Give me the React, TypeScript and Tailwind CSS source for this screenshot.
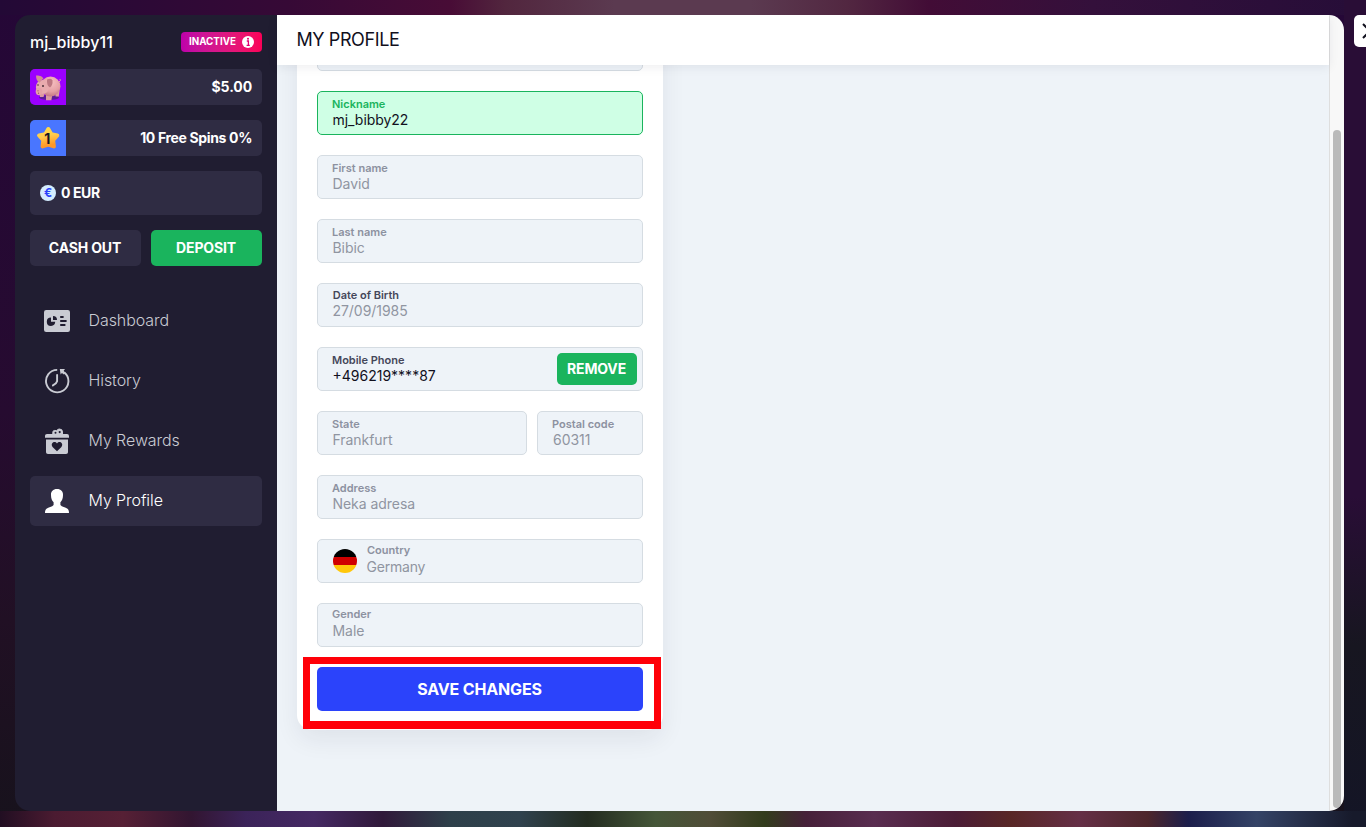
import React from "react";

type FieldProps = {
  label: string;
  value: string;
  className?: string;
  labelClass?: string;
  valueClass?: string;
};

function Field({
  label,
  value,
  className = "w-full border-[#d5dce2] bg-[#eef3f8] pt-[4px]",
  labelClass = "text-[#8c91a0]",
  valueClass = "text-[#9095a1]",
}: FieldProps) {
  return (
    <div className={`flex h-11 flex-col rounded-[5px] border pl-[14px] ${className}`}>
      <span className={`text-[11px] font-semibold leading-4 ${labelClass}`}>{label}</span>
      <span className={`pl-[0.5px] text-[14px] font-normal leading-4 tracking-[-0.05px] ${valueClass}`}>{value}</span>
    </div>
  );
}

function PigIcon() {
  return (
    <svg viewBox="0 0 36 36" className="h-9 w-9">
      <defs>
        <radialGradient id="pig" cx="0.55" cy="0.3" r="0.75">
          <stop offset="0" stopColor="#f7c0c2" />
          <stop offset="0.6" stopColor="#e5a0a5" />
          <stop offset="1" stopColor="#bd6f7e" />
        </radialGradient>
      </defs>
      <ellipse cx="19" cy="28.5" rx="10" ry="2.5" fill="#5b1c9a" />
      <path d="M29 13q2-1 1-3" stroke="#e3a3a7" fill="none" />
      <path d="M9.5 24l.6 4h3.4l1-3M25 22l.6 5.5h3.2l.8-6M16 26v5.3h5.4l.8-5" fill="#dc9aa0" />
      <ellipse cx="20.5" cy="17.5" rx="10" ry="10" fill="url(#pig)" />
      <ellipse cx="12.5" cy="18" rx="6.6" ry="7" fill="#e9abae" />
      <path d="M6 6.6q5-1 7.5 2.6l-4 4.6q-3.5-2-3.5-7.2z" fill="#d28e95" />
      <path d="M17 10.5q4.5-2 5.5 1 .5 4.5-2.5 7-3.5-2-3-8z" fill="#bd7882" />
      <ellipse cx="9" cy="22.5" rx="3.3" ry="3.7" fill="#e5a2a7" />
      <circle cx="8" cy="21.8" r=".6" fill="#8e4b58" />
      <circle cx="8.5" cy="24.2" r=".6" fill="#8e4b58" />
      <circle cx="8" cy="16" r=".8" fill="#493039" />
      <circle cx="13" cy="17" r="1" fill="#493039" />
    </svg>
  );
}

function StarIcon() {
  return (
    <svg viewBox="0 0 36 36" className="h-9 w-9">
      <defs>
        <linearGradient id="star" x1="0" y1="0" x2="0.2" y2="1">
          <stop offset="0" stopColor="#ffdc49" />
          <stop offset="0.45" stopColor="#ffcc4c" />
          <stop offset="1" stopColor="#ff9828" />
        </linearGradient>
      </defs>
      <path
        d="M18.3 9l3 5.3 6 1.2-4.2 4.7.8 6.2-5.6-1.7-5.7 1.7.7-6.2-4.2-4.700 6.200-1.200z"
        fill="url(#star)"
        stroke="url(#star)"
        strokeWidth="4"
        strokeLinejoin="round"
      />
      <text x="17.3" y="23.5" textAnchor="middle" fontFamily="Inter" fontSize="14" fontWeight="700" fill="#171525">1</text>
    </svg>
  );
}

function DashboardIcon() {
  return (
    <svg viewBox="0 0 26 22" className="h-[22px] w-[26px]">
      <rect width="26" height="22" rx="2.2" fill="#c9cbd3" />
      <path d="M7 7.5v4.3h4.2A4.2 4.2 0 1 1 7 7.5z" fill="#201d31" />
      <path d="M9 6a4 4 0 0 1 4 4H9z" fill="#201d31" />
      <path d="M16.2 7h3.4M16.2 11h6.4M16.2 15h5.2" stroke="#201d31" strokeWidth="1.8" />
    </svg>
  );
}

function HistoryIcon() {
  return (
    <svg viewBox="0 0 26 26" className="h-[26px] w-[26px]" fill="none" stroke="#c9cbd3">
      <path d="M13.2 1.9A11.2 11.2 0 1 0 20.4 4.5" strokeWidth="1.9" />
      <path d="M15.8 1h5.2l-1.300 1.800 1.800 2.200-1.600 1.400-2-1.400-1.300 1.500z" fill="#c9cbd3" stroke="none" />
      <path d="M13.1 7v6.2q-.4 2-4.2 4.2" strokeWidth="1.9" strokeLinecap="round" />
    </svg>
  );
}

function RewardsIcon() {
  return (
    <svg viewBox="0 0 24 27" className="h-[27px] w-6">
      <path d="M7.8 6.6V4.2Q7.8 2.4 9.8 2.4l1.8.4Q12.4 1 14.5 1q3 0 3 3v2.6" fill="#c9cbd3" stroke="#c9cbd3" />
      <circle cx="10.5" cy="4.8" r="1" fill="#201d31" />
      <circle cx="14.7" cy="4.1" r="1.1" fill="#201d31" />
      <path d="M0 9V7.8Q0 6 2 6h20q2 0 2 2v1.8H0zM1 11.5h22v12.7q0 1.8-2 1.8H3q-2 0-2-1.8z" fill="#c9cbd3" />
      <path d="M12 23.2l-4.2-4C4.700 15.800 9.300 12 12 15.500c2.700-3.500 7.300.300 4.200 3.700z" fill="#201d31" />
    </svg>
  );
}

function ProfileIcon() {
  return (
    <svg viewBox="0 0 24 24" className="h-6 w-6">
      <path d="M12 0c4.2 0 6.2 2.7 6 6.3 0 3.6-1.1 5.2-2.6 7v2.6c1.4 1.8 5.2 2.2 7.1 3.8 1.1.8 1.5 2.2 1.5 4.3H0c0-2.1.4-3.5 1.5-4.3 1.9-1.6 5.7-2 7.1-3.8v-2.6C7.1 11.5 6 9.9 6 6.3 5.8 2.7 7.8 0 12 0z" fill="#fff" />
    </svg>
  );
}

const menu = [
  { label: "Dashboard", icon: <DashboardIcon /> },
  { label: "History", icon: <HistoryIcon /> },
  { label: "My Rewards", icon: <RewardsIcon /> },
  { label: "My Profile", icon: <ProfileIcon />, active: true },
];

function Sidebar() {
  return (
    <aside className="flex w-[262px] shrink-0 flex-col bg-[#201d31] px-[15px] text-white">
      <div className="mt-[17px] flex h-5 items-center justify-between">
        <span className="text-[16px] font-medium leading-5 tracking-[0.1px]">mj_bibby11</span>
        <div className="flex h-5 w-[81px] items-center gap-[6px] rounded bg-gradient-to-r from-[#bd00aa] to-[#fb0057] pl-2">
          <span className="text-[9.8px] font-bold">INACTIVE</span>
          <svg viewBox="0 0 12 12" className="h-3 w-3 shrink-0">
            <circle cx="6" cy="6" r="6" fill="#fff" />
            <path d="M4.8 5h1.6v3.8M4.6 9.3h3.2" stroke="#e10072" strokeWidth="1.3" fill="none" />
            <circle cx="6" cy="2.8" r="1" fill="#e10072" />
          </svg>
        </div>
      </div>
      <div className="mt-[17px] flex h-9 items-center justify-between overflow-hidden rounded-[5px] bg-[#2f2c43] pr-[10px]">
        <div className="h-9 w-9 bg-[#9b00ff]"><PigIcon /></div>
        <span className="pb-px text-[14px] font-bold tracking-[-0.1px]">$5.00</span>
      </div>
      <div className="mt-[15px] flex h-9 items-center justify-between overflow-hidden rounded-[5px] bg-[#2f2c43] pr-[10px]">
        <div className="h-9 w-9 bg-[#4976ff]"><StarIcon /></div>
        <span className="pb-px text-[14px] font-bold tracking-[-0.35px]">10 Free Spins 0%</span>
      </div>
      <div className="mt-[15px] flex h-11 items-center gap-[5px] rounded-[5px] bg-[#2f2c43] pl-[10px]">
        <span className="flex h-4 w-4 items-center justify-center rounded-full bg-[#d4edff] text-[12px] font-bold leading-4 text-[#2b43fb]">€</span>
        <span className="pb-px text-[14px] font-bold tracking-[-0.4px]">0 EUR</span>
      </div>
      <div className="mt-[15px] grid grid-cols-2 gap-[10px]">
        <button className="h-9 rounded-[5px] bg-[#2f2c43] pb-px pr-px text-[14px] font-bold tracking-[-0.15px]">CASH OUT</button>
        <button className="h-9 rounded-[5px] bg-[#1ab45d] pb-px pr-px text-[14px] font-bold tracking-[-0.15px]">DEPOSIT</button>
      </div>
      <nav className="mt-[30px] flex flex-col gap-[10px]">
        {menu.map((item) => (
          <div
            key={item.label}
            className={`flex h-[50px] items-center rounded-[5px] pl-[14px] ${item.active ? "bg-[#2f2c43] text-white" : "text-[#c9cbd3]"}`}
          >
            <span className="flex w-[26px] justify-center">{item.icon}</span>
            <span className="ml-[18.5px] pb-[2px] text-[16px] font-light tracking-[-0.08px]">{item.label}</span>
          </div>
        ))}
      </nav>
    </aside>
  );
}

export default function App() {
  return (
    <div className="relative h-[827px] w-[1366px] overflow-hidden bg-[#200c2f] p-[15px] font-['Inter',sans-serif]">
      <div className="absolute inset-0 bg-[linear-gradient(180deg,#250737_0%,#260b30_50%,#211024_75%,#17121c_100%)]" />
      <div className="absolute inset-x-0 top-0 h-[15px] bg-[linear-gradient(90deg,#230936_0%,#360936_21%,#480c36_33%,#52263e_37%,#5b3a50_45%,#5b3a50_55%,#522741_62%,#420c36_68%,#34103b_80%,#260d38_100%)]" />
      <div className="absolute inset-y-0 right-0 w-[22px] bg-[linear-gradient(180deg,#290d36_0%,#290d36_60%,#171620_78%,#141526_100%)]" />
      <div className="absolute inset-x-0 bottom-0 h-4 bg-[linear-gradient(90deg,#210e22_0%,#4b1b31_4%,#562035_9%,#321531_14%,#3b2359_18%,#452963_23%,#30193a_28%,#2e404a_33%,#30424e_38%,#232c20_43%,#455638_48%,#504c37_52%,#323c1c_56%,#462039_59%,#592d50_64%,#4b1d36_70%,#582726_74%,#652f46_79%,#4d262b_84%,#1c1e4b_87%,#344366_92%,#171a2b_99%)]" />
      <div className="relative flex h-[796px] w-[1329px] overflow-hidden rounded-[15px]">
        <Sidebar />
        <main className="flex min-w-0 flex-1 flex-col bg-[#eef3f8]">
          <header className="relative z-10 flex h-[50px] shrink-0 items-center bg-white pb-[2px] pl-[19.5px] shadow-[0_2px_10px_rgba(25,30,50,0.08)]">
            <h1 className="text-[18px] font-normal tracking-[-0.4px] text-[#11101d]">MY PROFILE</h1>
          </header>
          <section className="flex-1 overflow-hidden pl-5">
            <div className="relative -mt-[38px] h-[703px] w-[366px] rounded-[15px] bg-white px-5 shadow-[0_10px_25px_rgba(25,30,50,0.07)]">
              <div className="flex flex-col gap-5">
                <Field label="" value="" />
                <Field
                  label="Nickname"
                  value="mj_bibby22"
                  className="w-full border-[#1ab45d] bg-[#cfffe5] pt-[4px]"
                  labelClass="text-[#1ab45d]"
                  valueClass="text-[#11101d]"
                />
                <Field label="First name" value="David" />
                <Field label="Last name" value="Bibic" />
                <Field
                  label="Date of Birth"
                  value="27/09/1985"
                  className="w-full border-[#d5dce2] bg-[#eef3f8] pt-[3px]"
                  labelClass="pl-[0.7px] text-[#45475a]"
                />
                <div className="flex h-11 items-center justify-between rounded-[5px] border border-[#d5dce2] bg-[#eef3f8] pl-[14px] pr-[5px]">
                  <div className="flex flex-col pb-[2px]">
                    <span className="text-[11px] font-semibold leading-4 text-[#45475a]">Mobile Phone</span>
                    <span className="pl-[0.5px] text-[14px] font-normal leading-4 text-[#11101d]">+496219****87</span>
                  </div>
                  <button className="h-8 w-20 rounded-[5px] bg-[#1ab45d] pb-px pr-px text-[14px] font-bold tracking-[-0.15px] text-white">REMOVE</button>
                </div>
                <div className="flex gap-[10px]">
                  <Field label="State" value="Frankfurt" className="w-[210px] border-[#d5dce2] bg-[#eef3f8] pt-[4px]" />
                  <Field label="Postal code" value="60311" className="w-[106px] border-[#d5dce2] bg-[#eef3f8] pt-[4px]" valueClass="ml-[0.5px] text-[#9095a1]" />
                </div>
                <Field label="Address" value="Neka adresa" />
                <div className="flex h-11 items-center rounded-[5px] border border-[#d5dce2] bg-[#eef3f8] pl-[15px]">
                  <svg viewBox="0 0 24 24" className="h-6 w-6 overflow-hidden rounded-full">
                    <path d="M0 0h24v8H0z" fill="#000" />
                    <path d="M0 8h24v8H0z" fill="#d00000" />
                    <path d="M0 16h24v8H0z" fill="#ffc70a" />
                  </svg>
                  <div className="ml-[9.5px] flex flex-col pb-[4px]">
                    <span className="pl-[0.5px] text-[11px] font-semibold leading-4 text-[#8c91a0]">Country</span>
                    <span className="text-[14px] font-normal leading-[18px] tracking-[-0.2px] text-[#9095a1]">Germany</span>
                  </div>
                </div>
                <Field
                  label="Gender"
                  value="Male"
                  className="w-full border-[#d5dce2] bg-[#eef3f8] pt-[2px]"
                  valueClass="mt-px text-[#9095a1]"
                />
                <button className="h-11 rounded-[5px] bg-[#2b43fb] pr-px text-[16px] font-bold tracking-[-0.15px] text-white">SAVE CHANGES</button>
              </div>
              <div className="absolute bottom-px left-[6px] h-[72px] w-[358px] border-[7px] border-b-8 border-[#ff0008]" />
            </div>
          </section>
        </main>
        <div className="flex w-[15px] flex-col border-l border-[#dedede] bg-[#f8f8f8] pl-[3px] pt-[115px]">
          <div className="h-[678px] w-2 rounded-full bg-[#bababa]" />
        </div>
      </div>
      <div className="absolute left-[1354px] top-[15px] flex h-8 w-8 items-center rounded-[5px] bg-white pl-[8px]">
        <svg viewBox="0 0 16 16" className="h-4 w-4" stroke="#11101d" strokeWidth="2">
          <path d="M1 1l14 14M15 1L1 15" />
        </svg>
      </div>
    </div>
  );
}
